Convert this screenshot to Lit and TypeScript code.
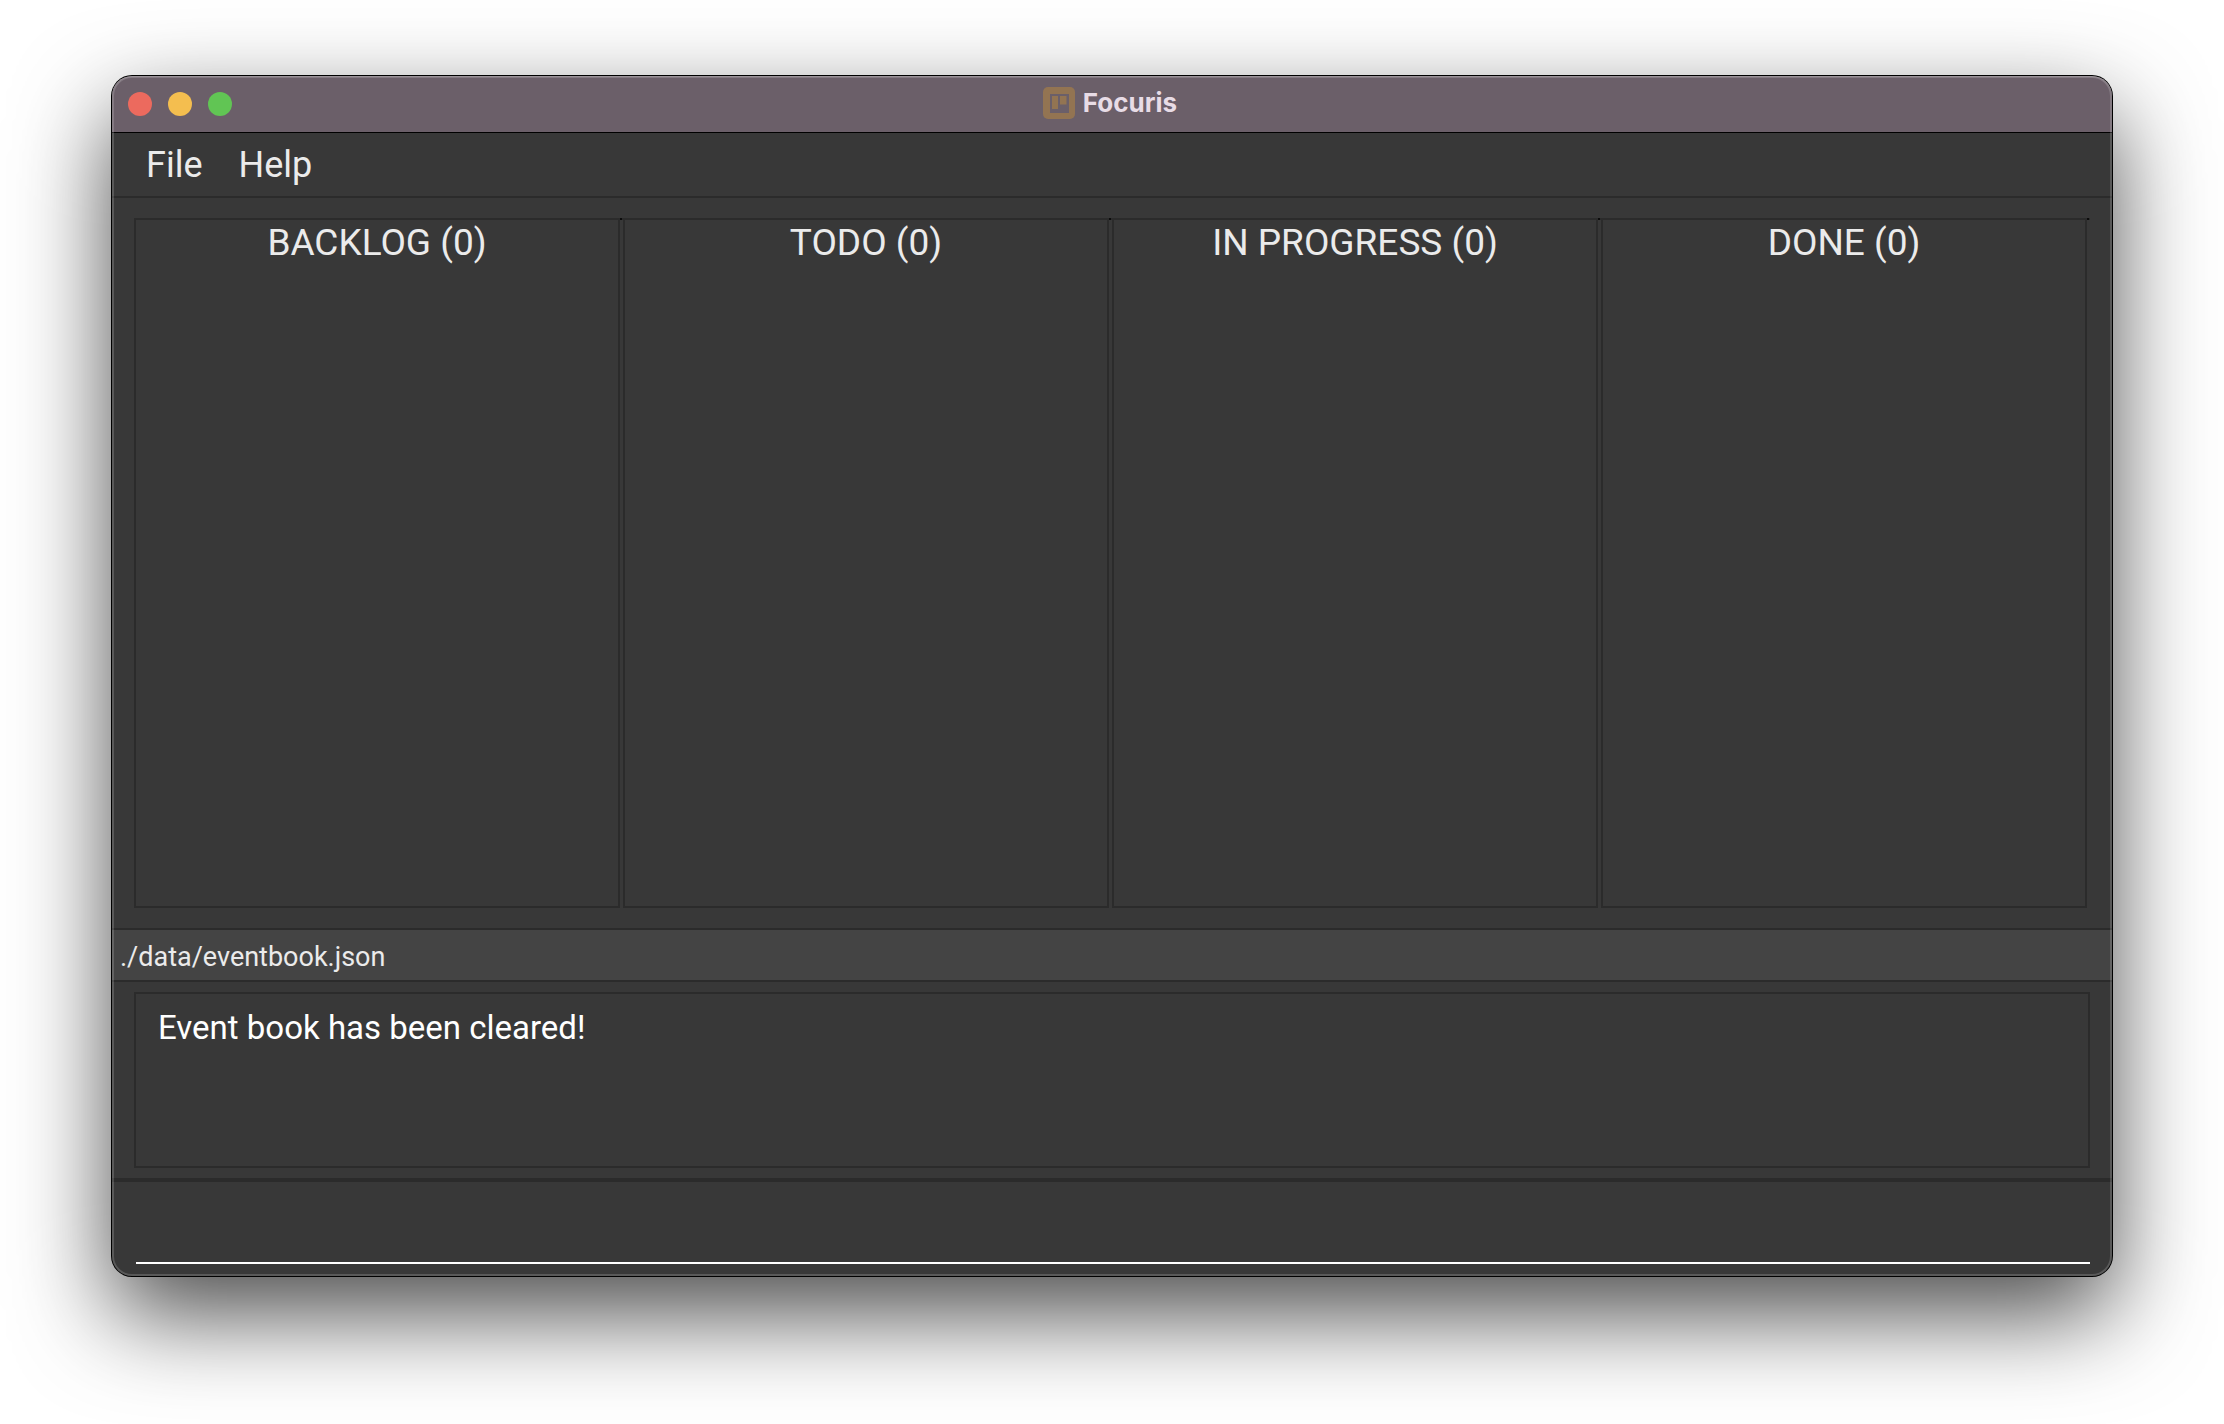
import { LitElement, html, css } from "lit";
import { customElement, state } from "lit/decorators.js";

interface BoardColumn {
  name: string;
  count: number;
}

@customElement("app-root")
export class AppRoot extends LitElement {
  static styles = css`
    :host {
      --surface: #383838;
      --line: #2b2b2b;
      --text: #ebebeb;
      display: flex;
      box-sizing: border-box;
      min-height: 100vh;
      padding: 76px 112px 148px;
      background: #fff;
      color: var(--text);
      font-family: Roboto, "Liberation Sans", sans-serif;
      font-size: 36px;
      overflow: hidden;
    }
    button,
    input,
    textarea {
      margin: 0;
      padding: 0;
      border: 0;
      border-radius: 0;
      background: none;
      color: inherit;
      font: inherit;
      outline: none;
    }
    .window {
      position: relative;
      flex: 1;
      min-width: 0;
      display: flex;
      flex-direction: column;
      border-radius: 20px;
      background: var(--surface);
      box-shadow: 0 0 0 1px #000, 0 38px 96px rgba(0, 0, 0, 0.71);
    }
    .window::after {
      content: "";
      position: absolute;
      inset: 0;
      border-radius: inherit;
      box-shadow: inset 0 1px rgba(255, 255, 255, 0.18), inset 0 0 0 2px rgba(255, 255, 255, 0.17);
      pointer-events: none;
    }
    .titlebar {
      display: grid;
      grid-template-columns: 1fr auto 1fr;
      align-items: center;
      height: 56px;
      padding: 0 16px;
      border-bottom: 1px solid #000;
      border-radius: 20px 20px 0 0;
      background: #6b5f69;
    }
    .lights {
      display: flex;
      gap: 16px;
    }
    .light {
      width: 24px;
      height: 24px;
      border-radius: 50%;
    }
    .close { background: #ec6a5e; }
    .minimise { background: #f4be4f; }
    .zoom { background: #61c554; }
    .title {
      display: flex;
      align-items: center;
      gap: 8px;
      margin: 0;
      padding: 0 4px 2px 0;
      color: #e8dce6;
      font: 700 26px/32px Inter, "Liberation Sans", sans-serif;
    }
    .logo {
      display: block;
      width: 32px;
      height: 32px;
    }
    .menubar {
      display: flex;
      height: 63px;
      padding: 0 16px;
      border-bottom: 2px solid var(--line);
    }
    .menu {
      padding: 0 18px;
    }
    .board {
      flex: 1;
      display: flex;
      padding: 20px 22px;
    }
    .columns {
      flex: 1;
      display: grid;
      grid-template-columns: repeat(4, 1fr);
      border-top: 2px solid var(--line);
    }
    .column {
      position: relative;
      margin-right: 3px;
      border: solid var(--line);
      border-width: 0 2px 2px;
    }
    .column::after {
      content: "";
      position: absolute;
      top: -2px;
      right: -4px;
      width: 2px;
      height: 2px;
      background: #0c0c0c;
    }
    .heading {
      margin: 0;
      text-align: center;
      font-size: 37px;
      font-weight: 400;
      line-height: 46px;
    }
    .status {
      padding: 4px 8px 0;
      border: solid var(--line);
      border-width: 2px 0;
      background: #444;
      font-size: 27px;
      line-height: 46px;
    }
    .result {
      display: flex;
      padding: 10px 22px;
      border-bottom: 4px solid var(--line);
    }
    .message {
      flex: 1;
      box-sizing: border-box;
      height: 176px;
      padding: 14px 22px;
      border: 2px solid var(--line);
      color: #fff;
      font-size: 33px;
      line-height: 40px;
      resize: none;
    }
    .command {
      display: flex;
      padding: 0 22px 12px 24px;
    }
    .entry {
      flex: 1;
      min-width: 0;
      height: 80px;
      border-bottom: 2px solid #fff;
      line-height: 40px;
    }
  `;

  @state() private columns: BoardColumn[] = [
    { name: "BACKLOG", count: 0 },
    { name: "TODO", count: 0 },
    { name: "IN PROGRESS", count: 0 },
    { name: "DONE", count: 0 },
  ];

  render() {
    return html`
      <main class="window">
        <header class="titlebar">
          <div class="lights">
            <button class="light close" aria-label="Close"></button>
            <button class="light minimise" aria-label="Minimise"></button>
            <button class="light zoom" aria-label="Zoom"></button>
          </div>
          <h1 class="title">
            <svg class="logo" viewBox="0 0 32 32" aria-hidden="true">
              <rect width="32" height="32" rx="5" fill="#937452" />
              <rect x="7" y="7" width="19" height="19" fill="#6b5f69" />
              <path d="M9 9h6v13h-6zM17 9h6.500v8.500h-6.500z" fill="#937452" />
            </svg>
            <span>Focuris</span>
          </h1>
        </header>
        <nav class="menubar">
          <button class="menu">File</button>
          <button class="menu">Help</button>
        </nav>
        <section class="board">
          <div class="columns">
            ${this.columns.map(
              (c) => html`<section class="column"><h2 class="heading">${c.name} (${c.count})</h2></section>`
            )}
          </div>
        </section>
        <div class="status">./data/eventbook.json</div>
        <div class="result">
          <textarea class="message" readonly aria-label="Result" .value=${"Event book has been cleared!"}></textarea>
        </div>
        <form class="command" @submit=${(e: Event) => e.preventDefault()}>
          <input class="entry" type="text" aria-label="Command" />
        </form>
      </main>
    `;
  }
}
